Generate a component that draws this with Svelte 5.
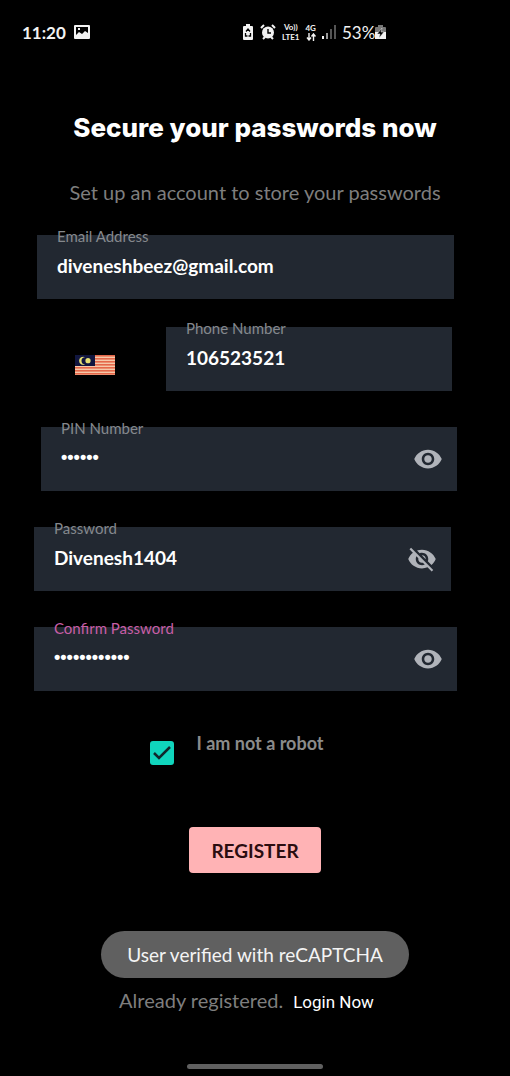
<script>
  let email = $state('diveneshbeez@gmail.com');
  let phone = $state('106523521');
  let pin = $state('140404');
  let password = $state('Divenesh1404');
  let confirm = $state('Divenesh1404');
  let human = $state(true);
  let showPin = $state(false);
  let showPassword = $state(true);
  let showConfirm = $state(false);

  const stripes = [0, 3, 6, 9, 12, 15, 18];
</script>

{#snippet eye(visible)}
  <svg viewBox="0 0 24 24" width="30" height="30" aria-hidden="true">
    {#if visible}
      <path d="M12 7c2.76 0 5 2.24 5 5 0 .65-.13 1.26-.36 1.83l2.92 2.92c1.51-1.26 2.7-2.89 3.43-4.75-1.73-4.39-6-7.5-11-7.5-1.4 0-2.74.25-3.98.7l2.16 2.16C10.74 7.13 11.35 7 12 7zM2 4.27l2.28 2.28.46.46C3.08 8.3 1.78 10.02 1 12c1.73 4.39 6 7.5 11 7.5 1.55 0 3.03-.3 4.38-.84l.42.42L19.73 22 21 20.73 3.27 3 2 4.27zM7.53 9.8l1.55 1.55c-.05.21-.08.43-.08.65 0 1.66 1.34 3 3 3 .22 0 .44-.03.65-.08l1.55 1.55c-.67.33-1.41.53-2.2.53-2.76 0-5-2.24-5-5 0-.79.2-1.53.53-2.2zm4.31-.78l3.15 3.15.02-.16c0-1.66-1.34-3-3-3l-.17.01z" />
    {:else}
      <path d="M12 4.5C7 4.5 2.73 7.61 1 12c1.73 4.39 6 7.5 11 7.5s9.27-3.11 11-7.5c-1.73-4.39-6-7.5-11-7.5zM12 17c-2.76 0-5-2.24-5-5s2.24-5 5-5 5 2.24 5 5-2.24 5-5 5zm0-8c-1.66 0-3 1.34-3 3s1.34 3 3 3 3-1.34 3-3-1.34-3-3-3z" />
    {/if}
  </svg>
{/snippet}

<div class="screen">
  <header class="status">
    <div class="group">
      <span class="clock">11:20</span>
      <svg viewBox="0 0 16 16" width="16" height="16" aria-hidden="true">
        <path fill="#f2f2f2" fill-rule="evenodd" d="M1 1h14a1 1 0 0 1 1 1v12a1 1 0 0 1-1 1H1a1 1 0 0 1-1-1V2a1 1 0 0 1 1-1zm1 2v8l3-3 3 2 3-3 3 2V3zm2 1h2v2H4z" />
      </svg>
    </div>
    <div class="group signals">
      <svg viewBox="0 0 12 16" width="12" height="16" aria-hidden="true">
        <path fill="#f2f2f2" d="M4 0h4v2h2a1 1 0 0 1 1 1v12a1 1 0 0 1-1 1H2a1 1 0 0 1-1-1V3a1 1 0 0 1 1-1h2z" />
        <path fill="none" stroke="#000" stroke-width="1.3" d="M4 7.5L6 5l2 2.500M3.500 9v3h2M8.500 9v3h-2" />
      </svg>
      <svg viewBox="0 0 16 16" width="16" height="16" aria-hidden="true">
        <circle cx="8" cy="8.500" r="6" fill="#f2f2f2" />
        <path fill="none" stroke="#f2f2f2" stroke-width="2" d="M1 4l3-3M15 4l-3-3M3 15l2-2M13 15l-2-2" />
        <path fill="none" stroke="#000" stroke-width="1.400" d="M8 5v4h3" />
      </svg>
      <span class="stack"><span>Vo))</span><span>LTE1</span></span>
      <span class="stack">
        <span>4G</span>
        <svg viewBox="0 0 10 8" width="10" height="8" aria-hidden="true">
          <path fill="none" stroke="#f2f2f2" stroke-width="1.400" d="M3 0v7M1 4.500l2 2.500 2-2.500M7.500 8V1M5.500 3.500L7.500 1l2 2.500" />
        </svg>
      </span>
      <svg viewBox="0 0 14 14" width="14" height="14" aria-hidden="true">
        <path fill="#f2f2f2" d="M0 11h2v3H0z" />
        <path fill="#999" d="M4 8h2v6H4z" />
        <path fill="#555" d="M8 4h2v10H8zM12 0h2v14h-2z" />
      </svg>
      <span class="battery">
        <span>53%</span>
        <svg viewBox="0 0 11 16" width="11" height="16" aria-hidden="true">
          <path fill="#777" d="M3 1h5v2h2a1 1 0 0 1 1 1v4H0V4a1 1 0 0 1 1-1h2z" />
          <path fill="#f2f2f2" d="M0 8h11v7H0z" />
          <path fill="#000" stroke="#f2f2f2" stroke-width=".5" d="M7 4L2 10h3l-1 4 5-6H6z" />
        </svg>
      </span>
    </div>
  </header>

  <main>
    <h1>Secure your passwords now</h1>
    <p class="intro">Set up an account to store your passwords</p>

    <form onsubmit={(event) => event.preventDefault()}>
      <div class="field email">
        <label for="email">Email Address</label>
        <input id="email" type="email" bind:value={email} />
      </div>

      <div class="phone-row">
        <button class="country" type="button" aria-label="Malaysia">
          <svg viewBox="0 0 40 20" width="40" height="20" aria-hidden="true">
            <rect width="40" height="20" fill="#f6c8a8" />
            {#each stripes as y}
              <rect {y} width="40" height="1.600" fill="#e5684a" />
            {/each}
            <rect width="20" height="11" fill="#11163f" />
            <path fill="#e5df72" d="M10 2.200a4 4 0 1 0 0 7 3.400 3.400 0 1 1 0-7z" />
            <circle cx="13" cy="5.700" r="2.600" fill="#e5df72" />
          </svg>
        </button>
        <div class="field">
          <label for="phone">Phone Number</label>
          <input id="phone" type="tel" bind:value={phone} />
        </div>
      </div>

      <div class="field pin">
        <label for="pin">PIN Number</label>
        <input id="pin" type={showPin ? 'text' : 'password'} class:masked={!showPin} bind:value={pin} />
        <button class="toggle" type="button" aria-label="Toggle PIN" onclick={() => (showPin = !showPin)}>
          {@render eye(showPin)}
        </button>
      </div>

      <div class="field password">
        <label for="password">Password</label>
        <input id="password" type={showPassword ? 'text' : 'password'} class:masked={!showPassword} bind:value={password} />
        <button class="toggle" type="button" aria-label="Toggle password" onclick={() => (showPassword = !showPassword)}>
          {@render eye(showPassword)}
        </button>
      </div>

      <div class="field confirm">
        <label for="confirm">Confirm Password</label>
        <input id="confirm" type={showConfirm ? 'text' : 'password'} class:masked={!showConfirm} bind:value={confirm} />
        <button class="toggle" type="button" aria-label="Toggle confirmation" onclick={() => (showConfirm = !showConfirm)}>
          {@render eye(showConfirm)}
        </button>
      </div>

      <div class="robot">
        <span class="box">
          <input id="human" type="checkbox" bind:checked={human} />
          {#if human}
            <svg viewBox="0 0 24 24" width="24" height="24" aria-hidden="true">
              <path fill="none" stroke="#10282c" stroke-width="2.500" d="M4 12l5 5L20 6" />
            </svg>
          {/if}
        </span>
        <label for="human">I am not a robot</label>
      </div>

      <button class="register" type="submit">REGISTER</button>
    </form>

    <div class="toast" role="status">User verified with reCAPTCHA</div>

    <p class="login"><span>Already registered.</span> <a href="#login">Login Now</a></p>
  </main>

  <div class="home"></div>
</div>

<style>
  :global(body) {
    background: #000;
  }

  .screen {
    box-sizing: border-box;
    min-height: 100vh;
    display: flex;
    flex-direction: column;
    padding-bottom: 7px;
    background: #000;
    color: #fff;
    font-family: Lato, sans-serif;
  }

  .screen * {
    box-sizing: border-box;
  }

  .screen svg {
    display: block;
    flex: none;
  }

  button,
  input {
    margin: 0;
    padding: 0;
    border: 0;
    background: none;
    color: inherit;
    font: inherit;
  }

  .status {
    display: grid;
    grid-template-columns: 220px auto;
    justify-content: start;
    align-items: center;
    height: 64px;
    padding: 0 22px;
    color: #f2f2f2;
  }

  .group {
    display: flex;
    align-items: center;
    gap: 8px;
  }

  .signals {
    gap: 6px;
  }

  .clock {
    font-size: 17px;
    font-weight: 700;
  }

  .stack {
    display: flex;
    flex-direction: column;
    align-items: center;
    font-size: 8px;
    font-weight: 700;
    line-height: 10px;
  }

  .battery {
    display: flex;
    align-items: center;
    font-size: 17px;
  }

  main {
    display: flex;
    flex-direction: column;
    align-items: center;
    padding-top: 48px;
  }

  h1 {
    margin: 0;
    font: 800 26px/32px Inter, sans-serif;
  }

  .intro {
    margin: 36px 0 31px;
    color: #7e7e7e;
    font-size: 20px;
    line-height: 24px;
  }

  form {
    align-self: stretch;
    display: flex;
    flex-direction: column;
  }

  .field {
    position: relative;
    display: flex;
    align-items: center;
    height: 64px;
    padding: 0 14px 0 20px;
    background: #222831;
  }

  .field label {
    position: absolute;
    top: -9px;
    left: 20px;
    color: #85888d;
    font-size: 15px;
    line-height: 20px;
  }

  .field input {
    flex: 1;
    min-width: 0;
    height: 28px;
    padding-bottom: 4px;
    outline: 0;
    font-size: 19px;
    font-weight: 700;
    line-height: 24px;
  }

  .field .masked {
    font-family: "Liberation Sans", sans-serif;
    font-size: 18px;
  }

  .email {
    margin: 0 56px 28px 37px;
  }

  .phone-row {
    display: grid;
    grid-template-columns: 132px 1fr;
    margin: 0 58px 36px 34px;
  }

  .country {
    display: grid;
    place-items: center;
    height: 76px;
    margin: 0 10px -12px 0;
    cursor: pointer;
  }

  .pin {
    margin: 0 53px 36px 41px;
  }

  .password {
    margin: 0 59px 36px 34px;
  }

  .confirm {
    margin: 0 53px 40px 34px;
  }

  .field.confirm label {
    color: #c85ea6;
  }

  .toggle {
    color: #b0b3b9;
    cursor: pointer;
  }

  .toggle svg {
    fill: currentColor;
  }

  .robot {
    align-self: center;
    display: flex;
    align-items: flex-start;
    gap: 22px;
    margin-right: 36px;
    margin-bottom: 62px;
  }

  .box {
    display: grid;
    margin-top: 10px;
  }

  .box > * {
    grid-area: 1 / 1;
  }

  .box svg {
    pointer-events: none;
  }

  .box input {
    appearance: none;
    width: 24px;
    height: 24px;
    border: 2px solid #10d5bd;
    border-radius: 3px;
  }

  .box input:checked {
    background: #10d5bd;
  }

  .robot label {
    color: #8b8b8b;
    font-size: 18px;
    font-weight: 700;
    line-height: 24px;
  }

  .register {
    align-self: center;
    height: 46px;
    padding: 0 22px;
    border-radius: 4px;
    background: #ffb3b5;
    color: #2b0d10;
    font-size: 19px;
    font-weight: 700;
    cursor: pointer;
  }

  .toast {
    margin-top: 58px;
    padding: 0 26px;
    border-radius: 24px;
    background: #606060;
    color: #f4f4f4;
    font-size: 19px;
    line-height: 47px;
  }

  .login {
    display: flex;
    align-items: baseline;
    gap: 10px;
    margin: 10px 17px 24px 0;
    color: #7e7e7e;
    font-size: 20px;
    line-height: 24px;
  }

  .login a {
    color: #fff;
    font-family: Roboto, sans-serif;
    font-size: 17px;
    text-decoration: none;
  }

  .home {
    align-self: center;
    width: 136px;
    height: 5px;
    margin-top: auto;
    border-radius: 3px;
    background: #606060;
  }
</style>
